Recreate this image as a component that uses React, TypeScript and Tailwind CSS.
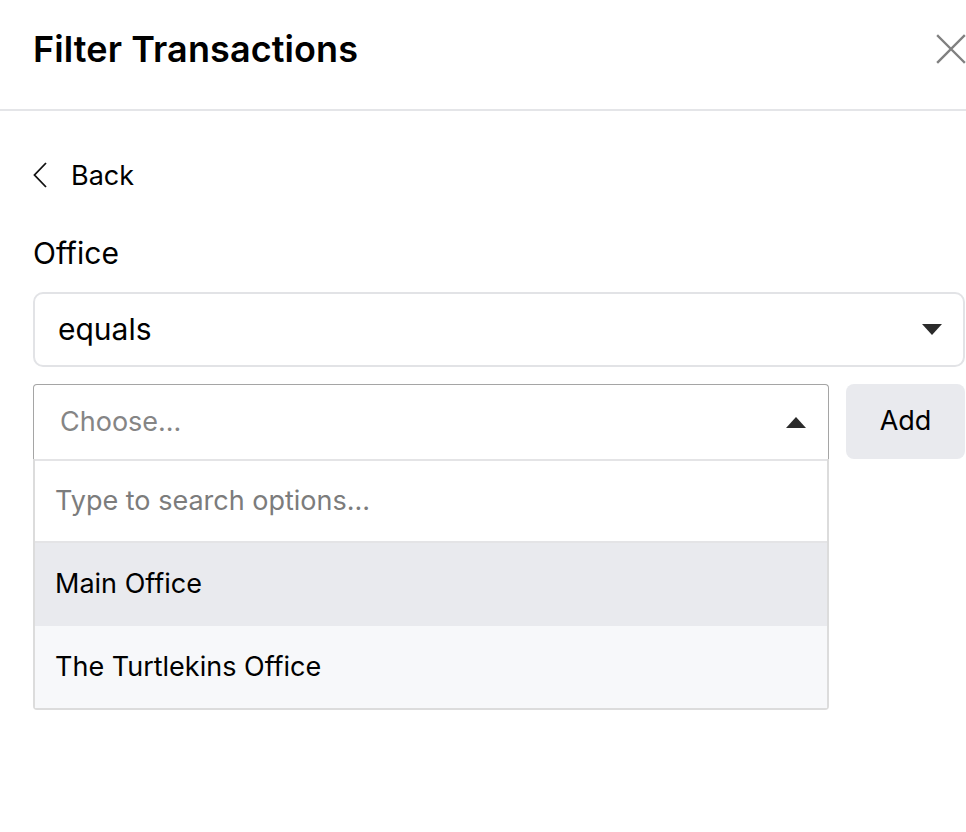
const options = ['Main Office', 'The Turtlekins Office'];

function Caret({ up }: { up?: boolean }) {
  return (
    <svg width="20" height="11" viewBox="0 0 20 11" className="shrink-0">
      <path d={up ? 'M0 11 L10 0 L20 11 Z' : 'M0 0 L20 0 L10 11 Z'} fill="#2b2b2b" />
    </svg>
  );
}

export default function App() {
  return (
    <div className="min-h-[832px] w-[966px] bg-white text-black font-['Inter',sans-serif]">
      {/* Header */}
      <div className="flex h-[111px] items-center justify-between border-b-2 border-[#e4e5e8] pb-[12px] pl-[33px] pr-[1px]">
        <h1 className="text-[36px] font-semibold tracking-[0.1px]">Filter Transactions</h1>
        <svg width="30" height="30" viewBox="0 0 30 30" className="mr-[-1px]">
          <path d="M2 2 L28 28 M28 2 L2 28" stroke="#808080" strokeWidth="2.4" strokeLinecap="square" />
        </svg>
      </div>

      <div className="pl-[33px] pr-[1px]">
        {/* Back */}
        <button className="mt-[50px] flex h-[28px] items-center gap-[24px] text-[27px] leading-none">
          <svg width="14" height="26" viewBox="0 0 14 26">
            <path d="M13 1 L1.5 13 L13 25" fill="none" stroke="#111" strokeWidth="1.8" />
          </svg>
          <span>Back</span>
        </button>

        {/* Office */}
        <div className="mt-[47px] text-[30px] leading-[34px]">Office</div>

        {/* Operator select */}
        <div className="mt-[22px] flex h-[75px] items-center justify-between rounded-[10px] border-2 border-[#e2e3e6] pl-[23px] pr-[21px] text-[30px]">
          <span>equals</span>
          <Caret />
        </div>

        {/* Value select + Add */}
        <div className="mt-[17px] flex gap-[17px]">
          <div className="w-[797px]">
            <div className="flex h-[75px] items-center justify-between rounded-t-[4px] border border-b-0 border-[#a5a5a5] pl-[26px] pr-[22px] text-[27px] text-[#858585]">
              <span>Choose...</span>
              <Caret up />
            </div>
            <div className="rounded-b-[4px] border-2 border-t-0 border-[#dcdcdc]">
              <div className="flex h-[84px] items-center border-b-2 border-t-2 border-[#e4e4e6] pl-[20px] text-[27px] text-[#7c7c7c]">
                Type to search options...
              </div>
              {options.map((o, i) => (
                <div
                  key={o}
                  className={
                    i === 0
                      ? 'flex h-[83px] items-center bg-[#e9eaee] pl-[20px] text-[27px]'
                      : 'flex h-[82px] items-center bg-[#f7f8fa] pl-[20px] text-[27px]'
                  }
                >
                  {o}
                </div>
              ))}
            </div>
          </div>
          <button className="flex h-[75px] w-[119px] items-center justify-center rounded-[8px] bg-[#e9eaee] text-[27px]">
            Add
          </button>
        </div>
      </div>
    </div>
  );
}
